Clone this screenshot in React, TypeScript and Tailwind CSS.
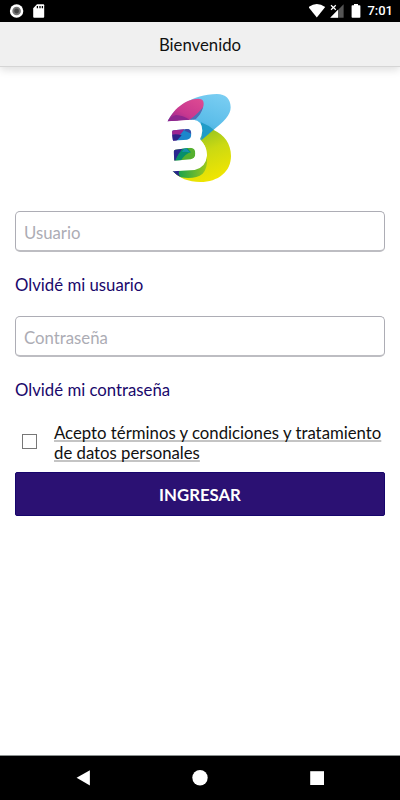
import React from "react";
import clsx from "clsx";

interface FieldProps {
  type: string;
  placeholder: string;
  link: string;
  className?: string;
}

const StatusBar = () => (
  <div className="flex h-[22px] shrink-0 items-center justify-between bg-black pr-[7px] pl-[9px] text-white">
    <svg width="40" height="22" viewBox="0 0 40 22">
      <circle cx="7.6" cy="11" r="6.7" fill="#fff" />
      <circle cx="7.6" cy="11" r="4.3" fill="#777" />
      <circle cx="7.6" cy="11" r="2.4" fill="#444" />
      <path d="M28 4.3h6.3q.9 0 .9.9v11.6q0 .9-.9.9h-9.2q-.9 0-.9-.9V8.2z" fill="#fff" />
      <path d="M28.4 6v2.3M31 6v2.3M33.4 6v2.3" stroke="#000" strokeWidth="1.3" />
    </svg>
    <div className="flex items-center">
      <svg width="54" height="22" viewBox="0 0 54 22">
        <path d="M-.6 7.1Q7.8.9 16.2 7.1L7.8 17.6z" fill="#fff" />
        <path d="M34.6 4.2v13.6H21.4z" fill="#555" />
        <path d="M29 9.8v8h-7.8z" fill="#fff" />
        <path d="M22 5.2l4.8 4.6M26.8 5.2L22 9.8" stroke="#fff" strokeWidth="1.2" />
        <path d="M45 4h4v1.3h1.6q.8 0 .8.8v10.9q0 .8-.8.8h-7.2q-.8 0-.8-.8V6.1q0-.8.8-.8H45z" fill="#fff" />
      </svg>
      <span className="ml-1 font-[Roboto] text-[13px] leading-[22px] font-medium">7:01</span>
    </div>
  </div>
);

const Logo = () => (
  <svg className="mx-auto" width="100" height="105" viewBox="0 0 300 315">
    <defs>
      <linearGradient id="sky" x1="0.8" y1="0" x2="0.3" y2="1">
        <stop offset="0" stopColor="#79cdf2" />
        <stop offset="0.55" stopColor="#5bbde9" />
        <stop offset="1" stopColor="#2795d4" />
      </linearGradient>
      <linearGradient id="pink" x1="0.9" y1="0" x2="0.1" y2="1">
        <stop offset="0" stopColor="#dd4a92" />
        <stop offset="0.6" stopColor="#c9388f" />
        <stop offset="1" stopColor="#92278f" />
      </linearGradient>
      <linearGradient id="lime" x1="0.3" y1="0" x2="0.7" y2="1">
        <stop offset="0" stopColor="#78b82a" />
        <stop offset="0.5" stopColor="#cbd912" />
        <stop offset="1" stopColor="#f3e600" />
      </linearGradient>
      <linearGradient id="leaf" x1="0" y1="0" x2="1" y2="0">
        <stop offset="0" stopColor="#009b55" />
        <stop offset="1" stopColor="#9bc81e" />
      </linearGradient>
      <clipPath id="upper">
        <path d="M71 136L111 132Q124 132 124 148Q124 162 111 164L69 167L66 141Q66 137 71 136Z" />
      </clipPath>
      <clipPath id="lower">
        <path d="M76 194L121 188Q136 189 136 205Q136 220 122 223L73 227L71 200Q71 195 76 194Z" />
      </clipPath>
    </defs>
    <path
      d="M53 109C72 70 126 27 201 27C227 27 242 42 242 67C242 91 221 111 191 134L152 166L132 100Z"
      fill="url(#sky)"
    />
    <path d="M53 109C68 75 105 42 145 41C171 41 163 74 137 102L115 105Z" fill="url(#pink)" />
    <path d="M53 109Q62 94 78 90Q98 91 119 104Z" fill="#8d278e" />
    <path d="M119 104Q145 86 159 66Q154 87 137 102L128 106Z" fill="#4774b8" />
    <path
      d="M153 116Q176 122 191 135C222 149 243 176 243 213C243 260 205 291 151 291C115 291 87 279 68 258L136 252Q165 240 170 210Q168 182 153 166Z"
      fill="url(#lime)"
    />
    <path d="M153 112Q176 121 191 134L154 166Z" fill="#209cc8" />
    <path d="M68 258L136 252Q160 242 171 219Q173 250 158 266Q135 284 93 277Q77 269 68 258Z" fill="url(#leaf)" />
    <path d="M68 258L88 258Q83 267 92 276Q79 270 68 258Z" fill="#29238b" />
    <path
      d="M53 110L129 104Q158 107 157 137Q156 153 148 166Q171 179 171 211Q168 248 134 255L68 259L62 194Z"
      fill="#fff"
    />
    <g clipPath="url(#upper)">
      <path d="M60 125H130V172H60z" fill="#1c86cc" />
      <path d="M60 125H110L88 152L76 172H60z" fill="#9c2591" />
      <path d="M60 151Q76 145 95 151L76 172H60z" fill="#2c2389" />
      <path d="M108 130H130V150Q112 139 103 138z" fill="#3c4ba6" />
    </g>
    <g clipPath="url(#lower)">
      <path d="M64 182H142V232H64z" fill="#55b02f" />
      <path d="M64 182H106L84 212L74 232H64z" fill="#2a2790" />
      <path d="M106 182L123 202Q104 206 90 232H74Q83 205 106 182z" fill="#078f6b" />
      <path d="M106 187L121 203Q107 198 96 201z" fill="#168fae" />
    </g>
  </svg>
);

const Field = ({ type, placeholder, link, className }: FieldProps) => (
  <div className={clsx("flex flex-col items-start", className)}>
    <input
      type={type}
      placeholder={placeholder}
      className="h-[41px] w-full rounded-[5px] border border-b-2 border-[#adadb5] border-b-[#bdbdc2] bg-white px-2 pt-[3px] text-[16.75px] placeholder:text-[#acacb4]"
    />
    <a className="mt-[23px] text-[16.75px] leading-5 text-[#19086b]">{link}</a>
  </div>
);

const NavigationBar = () => (
  <div className="flex h-[45px] shrink-0 items-center justify-around border-t border-[#8b9190] bg-black px-[25px]">
    <svg width="16" height="16" viewBox="0 0 16 16" fill="#fff">
      <path d="M1.6 7.8L14.9.2v15.2z" />
    </svg>
    <svg width="16" height="16" viewBox="0 0 16 16" fill="#fff">
      <circle cx="8" cy="7.8" r="7.7" />
    </svg>
    <svg width="16" height="16" viewBox="0 0 16 16" fill="#fff">
      <path d="M1.2 1.2H15V15H1.2z" />
    </svg>
  </div>
);

const App = () => {
  return (
    <div className="flex h-screen flex-col overflow-hidden bg-white font-[Lato,sans-serif] text-[#111]">
      <StatusBar />
      <header className="flex h-[45px] shrink-0 items-center justify-center border-b border-[#d5d5d5] bg-[#f0f0f0] pt-0.5 text-[16.75px] shadow-[0_3px_8px_rgba(0,0,0,0.13)]">
        Bienvenido
      </header>

      <main className="flex flex-1 flex-col px-[15px] pt-[18px]">
        <Logo />
        <Field type="text" placeholder="Usuario" link="Olvidé mi usuario" className="mt-[21px]" />
        <Field type="password" placeholder="Contraseña" link="Olvidé mi contraseña" className="mt-[21px]" />
        <label className="mt-[23px] flex items-start pl-[7px]">
          <input type="checkbox" className="mt-[11px] size-[15px] shrink-0 appearance-none border border-[#777] bg-white" />
          <span className="ml-[17px] text-[16.75px] leading-5 whitespace-nowrap underline decoration-[#c4c4c4] decoration-2 underline-offset-1 [text-decoration-skip-ink:none]">
            Acepto términos y condiciones y tratamiento
            <br />
            de datos personales
          </span>
        </label>
        <button className="mt-[9px] h-11 w-full rounded-[2px] border border-[#17056c] bg-[#2b1173] pt-0.5 text-[16.75px] font-bold text-white">
          INGRESAR
        </button>
      </main>

      <NavigationBar />
    </div>
  );
};

export default App;
